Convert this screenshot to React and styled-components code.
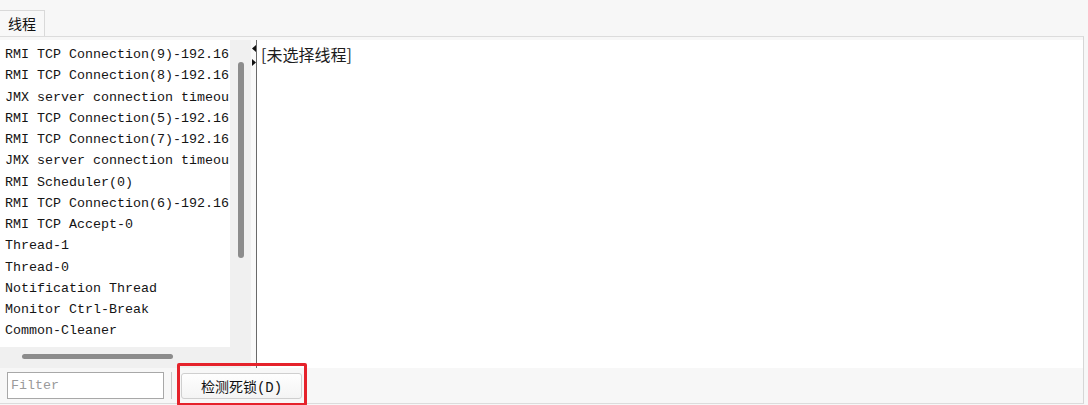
import React from 'react';
import styled, { createGlobalStyle } from 'styled-components';

const GlobalStyle = createGlobalStyle`
  html, body {
    margin: 0;
    padding: 0;
    background: #f7f7f7;
  }
`;

// the list is narrower than the thread names, so only the visible part is kept
const threads = [
  'RMI TCP Connection(9)-192.16',
  'RMI TCP Connection(8)-192.16',
  'JMX server connection timeou',
  'RMI TCP Connection(5)-192.16',
  'RMI TCP Connection(7)-192.16',
  'JMX server connection timeou',
  'RMI Scheduler(0)',
  'RMI TCP Connection(6)-192.16',
  'RMI TCP Accept-0',
  'Thread-1',
  'Thread-0',
  'Notification Thread',
  'Monitor Ctrl-Break',
  'Common-Cleaner',
  'Attach Listener',
];

const Window = styled.div`
  width: 1088px;
  height: 405px;
  background: #f7f7f7;
  display: flex;
  flex-direction: column;
  overflow: hidden;
  font-family: "Liberation Mono", "Noto Sans CJK SC", monospace;
`;

const TabBar = styled.div`
  height: 36px;
  padding-top: 10px;
  box-sizing: border-box;
  display: flex;
`;

const Tab = styled.div`
  width: 45px;
  height: 26px;
  box-sizing: border-box;
  border: 1px solid #d9d9d9;
  border-left: none;
  border-bottom: none;
  background: #f8f8f8;
  padding-left: 8px;
  font-family: "Noto Sans CJK SC", sans-serif;
  font-size: 14px;
  line-height: 24px;
  color: #111;
`;

const Panel = styled.div`
  width: 1084px;
  height: 368px;
  box-sizing: border-box;
  border-top: 1px solid #dcdcdc;
  border-right: 1px solid #d6d6d6;
  border-bottom: 1px solid #dcdcdc;
  padding-top: 3px;
  display: flex;
  flex-direction: column;
`;

const Content = styled.div`
  height: 328px;
  display: flex;
  background: #fff;
`;

const LeftPane = styled.div`
  width: 251px;
  display: flex;
  flex-direction: column;
`;

const ListRow = styled.div`
  flex: 1;
  display: flex;
  min-height: 0;
`;

const List = styled.div`
  width: 230px;
  background: #fff;
  overflow: hidden;
  padding-top: 4px;
  box-sizing: border-box;
`;

const Item = styled.div`
  height: 21.25px;
  line-height: 21.25px;
  padding-left: 5px;
  font-size: 13.33px;
  color: #141414;
  white-space: nowrap;
`;

const VScroll = styled.div`
  width: 21px;
  background: #f0f0f0;
  padding-top: 22px;
  box-sizing: border-box;
  display: flex;
  justify-content: center;
`;

const VThumb = styled.div`
  width: 6px;
  height: 196px;
  border-radius: 3px;
  background: #8c8c8c;
`;

const HScroll = styled.div`
  height: 21px;
  background: #f0f0f0;
  padding: 7px 0 0 22px;
  box-sizing: border-box;
`;

const HThumb = styled.div`
  width: 151px;
  height: 5px;
  border-radius: 3px;
  background: #8c8c8c;
`;

const Splitter = styled.div`
  width: 5px;
  background: #f9f9f9;
  border-right: 1px solid #6a6a6a;
  display: flex;
  flex-direction: column;
  align-items: center;
  padding-top: 5px;
  gap: 7px;
`;

const Arrow = styled.svg`
  width: 4px;
  height: 7px;
  display: block;
`;

const RightPane = styled.div`
  flex: 1;
  background: #fff;
  padding: 4px 0 0 4px;
  font-family: "Noto Sans CJK SC", sans-serif;
  font-size: 16px;
  line-height: 20px;
  color: #1c1c1c;
`;

const BottomBar = styled.div`
  flex: 1;
  display: flex;
  align-items: center;
  padding-left: 7px;
  background: #f7f7f7;
`;

const FilterInput = styled.input`
  width: 157px;
  height: 27px;
  box-sizing: border-box;
  border: 1px solid #a8a8a8;
  background: #fff;
  padding: 0 3px;
  font-family: "Liberation Mono", monospace;
  font-size: 13.33px;
  outline: none;
  &::placeholder {
    color: #9a9a9a;
  }
`;

const Separator = styled.div`
  width: 1px;
  height: 27px;
  background: #c8c8c8;
  margin: 0 9px 0 7px;
`;

const Highlight = styled.div`
  position: relative;
  display: flex;
`;

const RedBox = styled.div`
  position: absolute;
  left: -4px;
  right: -5px;
  top: -10px;
  bottom: -7px;
  border: 3px solid #e5222b;
  border-radius: 2px;
  pointer-events: none;
`;

const Button = styled.button`
  width: 121px;
  height: 26px;
  box-sizing: border-box;
  border: 1px solid #cfcfcf;
  border-radius: 3px;
  background: linear-gradient(#fefefe, #f4f4f4);
  font-family: "Liberation Mono", "Noto Sans CJK SC", monospace;
  font-size: 14px;
  color: #111;
  padding: 0;
`;

export default function App() {
  return (
    <>
      <GlobalStyle />
      <Window>
        <TabBar>
          <Tab>线程</Tab>
        </TabBar>
        <Panel>
          <Content>
            <LeftPane>
              <ListRow>
                <List>
                  {threads.map((t, i) => (
                    <Item key={i}>{t}</Item>
                  ))}
                </List>
                <VScroll>
                  <VThumb />
                </VScroll>
              </ListRow>
              <HScroll>
                <HThumb />
              </HScroll>
            </LeftPane>
            <Splitter>
              <Arrow viewBox="0 0 4 7">
                <path d="M4 0 L0 3.5 L4 7 Z" fill="#111" />
              </Arrow>
              <Arrow viewBox="0 0 4 7">
                <path d="M0 0 L4 3.5 L0 7 Z" fill="#111" />
              </Arrow>
            </Splitter>
            <RightPane>[未选择线程]</RightPane>
          </Content>
          <BottomBar>
            <FilterInput placeholder="Filter" />
            <Separator />
            <Highlight>
              <Button type="button">检测死锁(D)</Button>
              <RedBox />
            </Highlight>
          </BottomBar>
        </Panel>
      </Window>
    </>
  );
}
